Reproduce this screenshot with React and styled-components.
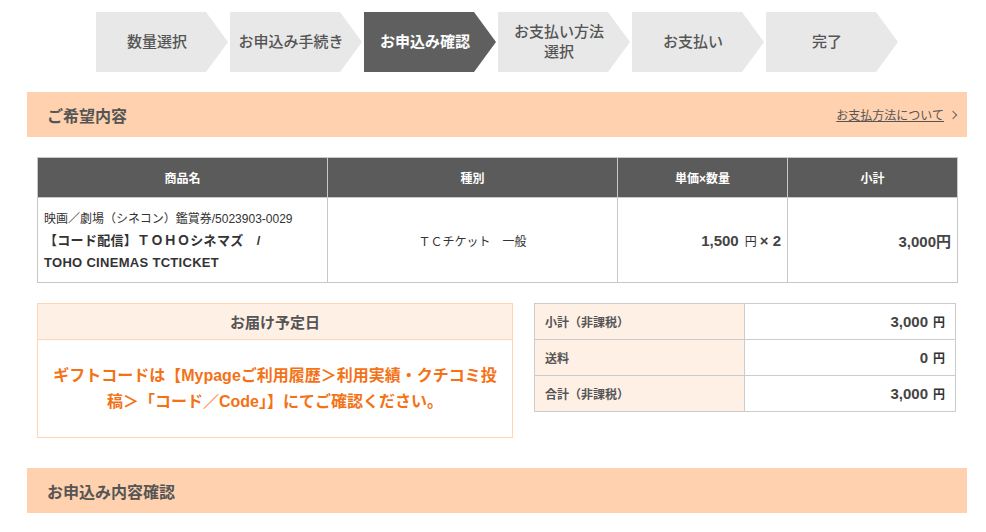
import styled, { createGlobalStyle } from "styled-components";

const GlobalStyle = createGlobalStyle`
  body {
    margin: 0;
    background: #fff;
    font-family: "Liberation Sans", "Noto Sans CJK JP", sans-serif;
    color: #333;
  }
`;

const Page = styled.div`
  width: 940px;
  margin-left: 27px;
  padding-top: 12px;
`;

const Steps = styled.ol`
  display: flex;
  justify-content: center;
  gap: 2px;
  list-style: none;
  margin: 0;
  padding: 0;
`;

const Step = styled.li`
  width: 132px;
  height: 60px;
  box-sizing: border-box;
  padding-right: 10px;
  display: flex;
  align-items: center;
  justify-content: center;
  text-align: center;
  white-space: pre-line;
  font-size: 15px;
  line-height: 20px;
  font-weight: ${(p) => (p.$active ? 700 : 500)};
  color: ${(p) => (p.$active ? "#fff" : "#555")};
  background: ${(p) => (p.$active ? "#5f5f5f" : "#e8e8e8")};
  clip-path: polygon(0 0, calc(100% - 22px) 0, 100% 50%, calc(100% - 22px) 100%, 0 100%);
`;

const SectionHead = styled.div`
  height: 45px;
  margin-top: ${(p) => p.$top}px;
  background: #ffd1ae;
  display: flex;
  align-items: center;
  justify-content: space-between;
  padding: 0 11px 0 20px;
`;

const SectionTitle = styled.h2`
  margin: 0;
  font-size: 16px;
  font-weight: 700;
  color: #555;
`;

const HeadLink = styled.a`
  font-size: 12px;
  color: #555;
  text-decoration: underline;
  display: flex;
  align-items: center;
  gap: 6px;
  &::after {
    content: "";
    width: 5px;
    height: 5px;
    border-top: 1px solid #666;
    border-right: 1px solid #666;
    transform: rotate(45deg);
    margin-top: 1px;
  }
`;

const Inner = styled.div`
  padding: 20px 10px 0;
`;

const ItemTable = styled.table`
  width: 920px;
  border-collapse: collapse;
  table-layout: fixed;
  font-size: 12px;
  th,
  td {
    border: 1px solid #c8c8c8;
    box-sizing: border-box;
  }
`;

const Col = styled.col`
  width: ${(p) => p.$w}px;
`;

const Th = styled.th`
  height: 40px;
  padding: 0;
  background: #5b5b5b;
  color: #fff;
  font-size: 12px;
  font-weight: 700;
`;

const Td = styled.td`
  height: 85px;
  padding: 0 6px;
  text-align: ${(p) => p.$align || "center"};
  vertical-align: middle;
  color: #333;
`;

const ProductCode = styled.div`
  font-size: 12px;
  line-height: 22px;
  padding-top: 2px;
`;

const ProductName = styled.div`
  font-size: 13px;
  font-weight: 700;
  line-height: 22px;
  letter-spacing: 0.3px;
`;

const Price = styled.span`
  font-size: 15px;
  font-weight: 700;
  color: #444;
`;

const Yen = styled.span`
  font-size: 12px;
  font-weight: ${(p) => (p.$bold ? 700 : 400)};
  margin: 0 ${(p) => p.$right || 0}px 0 ${(p) => p.$left || 0}px;
`;

const Bottom = styled.div`
  display: flex;
  justify-content: space-between;
  align-items: flex-start;
  margin-top: 20px;
  padding-right: 1px;
`;

const DeliveryBox = styled.div`
  width: 476px;
  box-sizing: border-box;
  border: 1px solid #ffd5b5;
`;

const DeliveryHead = styled.div`
  height: 35px;
  background: #fff0e6;
  border-bottom: 1px solid #ffd5b5;
  display: flex;
  align-items: center;
  justify-content: center;
  font-size: 15px;
  font-weight: 700;
  color: #555;
`;

const DeliveryBody = styled.p`
  margin: 0;
  height: 97px;
  display: flex;
  align-items: center;
  justify-content: center;
  text-align: center;
  padding: 0 12px;
  font-size: 16px;
  line-height: 26px;
  font-weight: 700;
  color: #f47216;
`;

const SumTable = styled.table`
  width: 422px;
  border-collapse: collapse;
  td {
    border: 1px solid #cccccc;
    height: 36px;
    padding-top: 0;
    padding-bottom: 0;
    box-sizing: border-box;
  }
`;

const SumLabel = styled.td`
  width: 210px;
  background: #fff0e6;
  padding-left: 10px;
  font-size: 12px;
  font-weight: 700;
  color: #555;
`;

const SumValue = styled.td`
  text-align: right;
  padding-right: 10px;
`;

const steps = [
  "数量選択",
  "お申込み手続き",
  "お申込み確認",
  "お支払い方法\n選択",
  "お支払い",
  "完了",
];

const sums = [
  ["小計（非課税）", "3,000"],
  ["送料", "0"],
  ["合計（非課税）", "3,000"],
];

export default function App() {
  return (
    <>
      <GlobalStyle />
      <Page>
        <Steps>
          {steps.map((s, i) => (
            <Step key={s} $active={i === 2}>
              {s}
            </Step>
          ))}
        </Steps>

        <SectionHead $top={20}>
          <SectionTitle>ご希望内容</SectionTitle>
          <HeadLink>お支払方法について</HeadLink>
        </SectionHead>

        <Inner>
          <ItemTable>
            <colgroup>
              <Col $w={290} />
              <Col $w={290} />
              <Col $w={170} />
              <Col $w={170} />
            </colgroup>
            <thead>
              <tr>
                <Th>商品名</Th>
                <Th>種別</Th>
                <Th>単価×数量</Th>
                <Th>小計</Th>
              </tr>
            </thead>
            <tbody>
              <tr>
                <Td $align="left">
                  <ProductCode>映画／劇場（シネコン）鑑賞券/5023903-0029</ProductCode>
                  <ProductName>【コード配信】ＴＯＨＯシネマズ　/</ProductName>
                  <ProductName>TOHO CINEMAS TCTICKET</ProductName>
                </Td>
                <Td>ＴＣチケット　一般</Td>
                <Td $align="right">
                  <Price>1,500</Price>
                  <Yen $left={6} $right={3}>円</Yen>
                  <Price>× 2</Price>
                </Td>
                <Td $align="right">
                  <Price>3,000円</Price>
                </Td>
              </tr>
            </tbody>
          </ItemTable>

          <Bottom>
            <DeliveryBox>
              <DeliveryHead>お届け予定日</DeliveryHead>
              <DeliveryBody>
                ギフトコードは【Mypageご利用履歴＞利用実績・クチコミ投稿＞「コード／Code」】にてご確認ください。
              </DeliveryBody>
            </DeliveryBox>
            <SumTable>
              <tbody>
                {sums.map(([label, value]) => (
                  <tr key={label}>
                    <SumLabel>{label}</SumLabel>
                    <SumValue>
                      <Price>{value}</Price>
                      <Yen $bold $left={5}>円</Yen>
                    </SumValue>
                  </tr>
                ))}
              </tbody>
            </SumTable>
          </Bottom>
        </Inner>

        <SectionHead $top={30}>
          <SectionTitle>お申込み内容確認</SectionTitle>
        </SectionHead>
      </Page>
    </>
  );
}
